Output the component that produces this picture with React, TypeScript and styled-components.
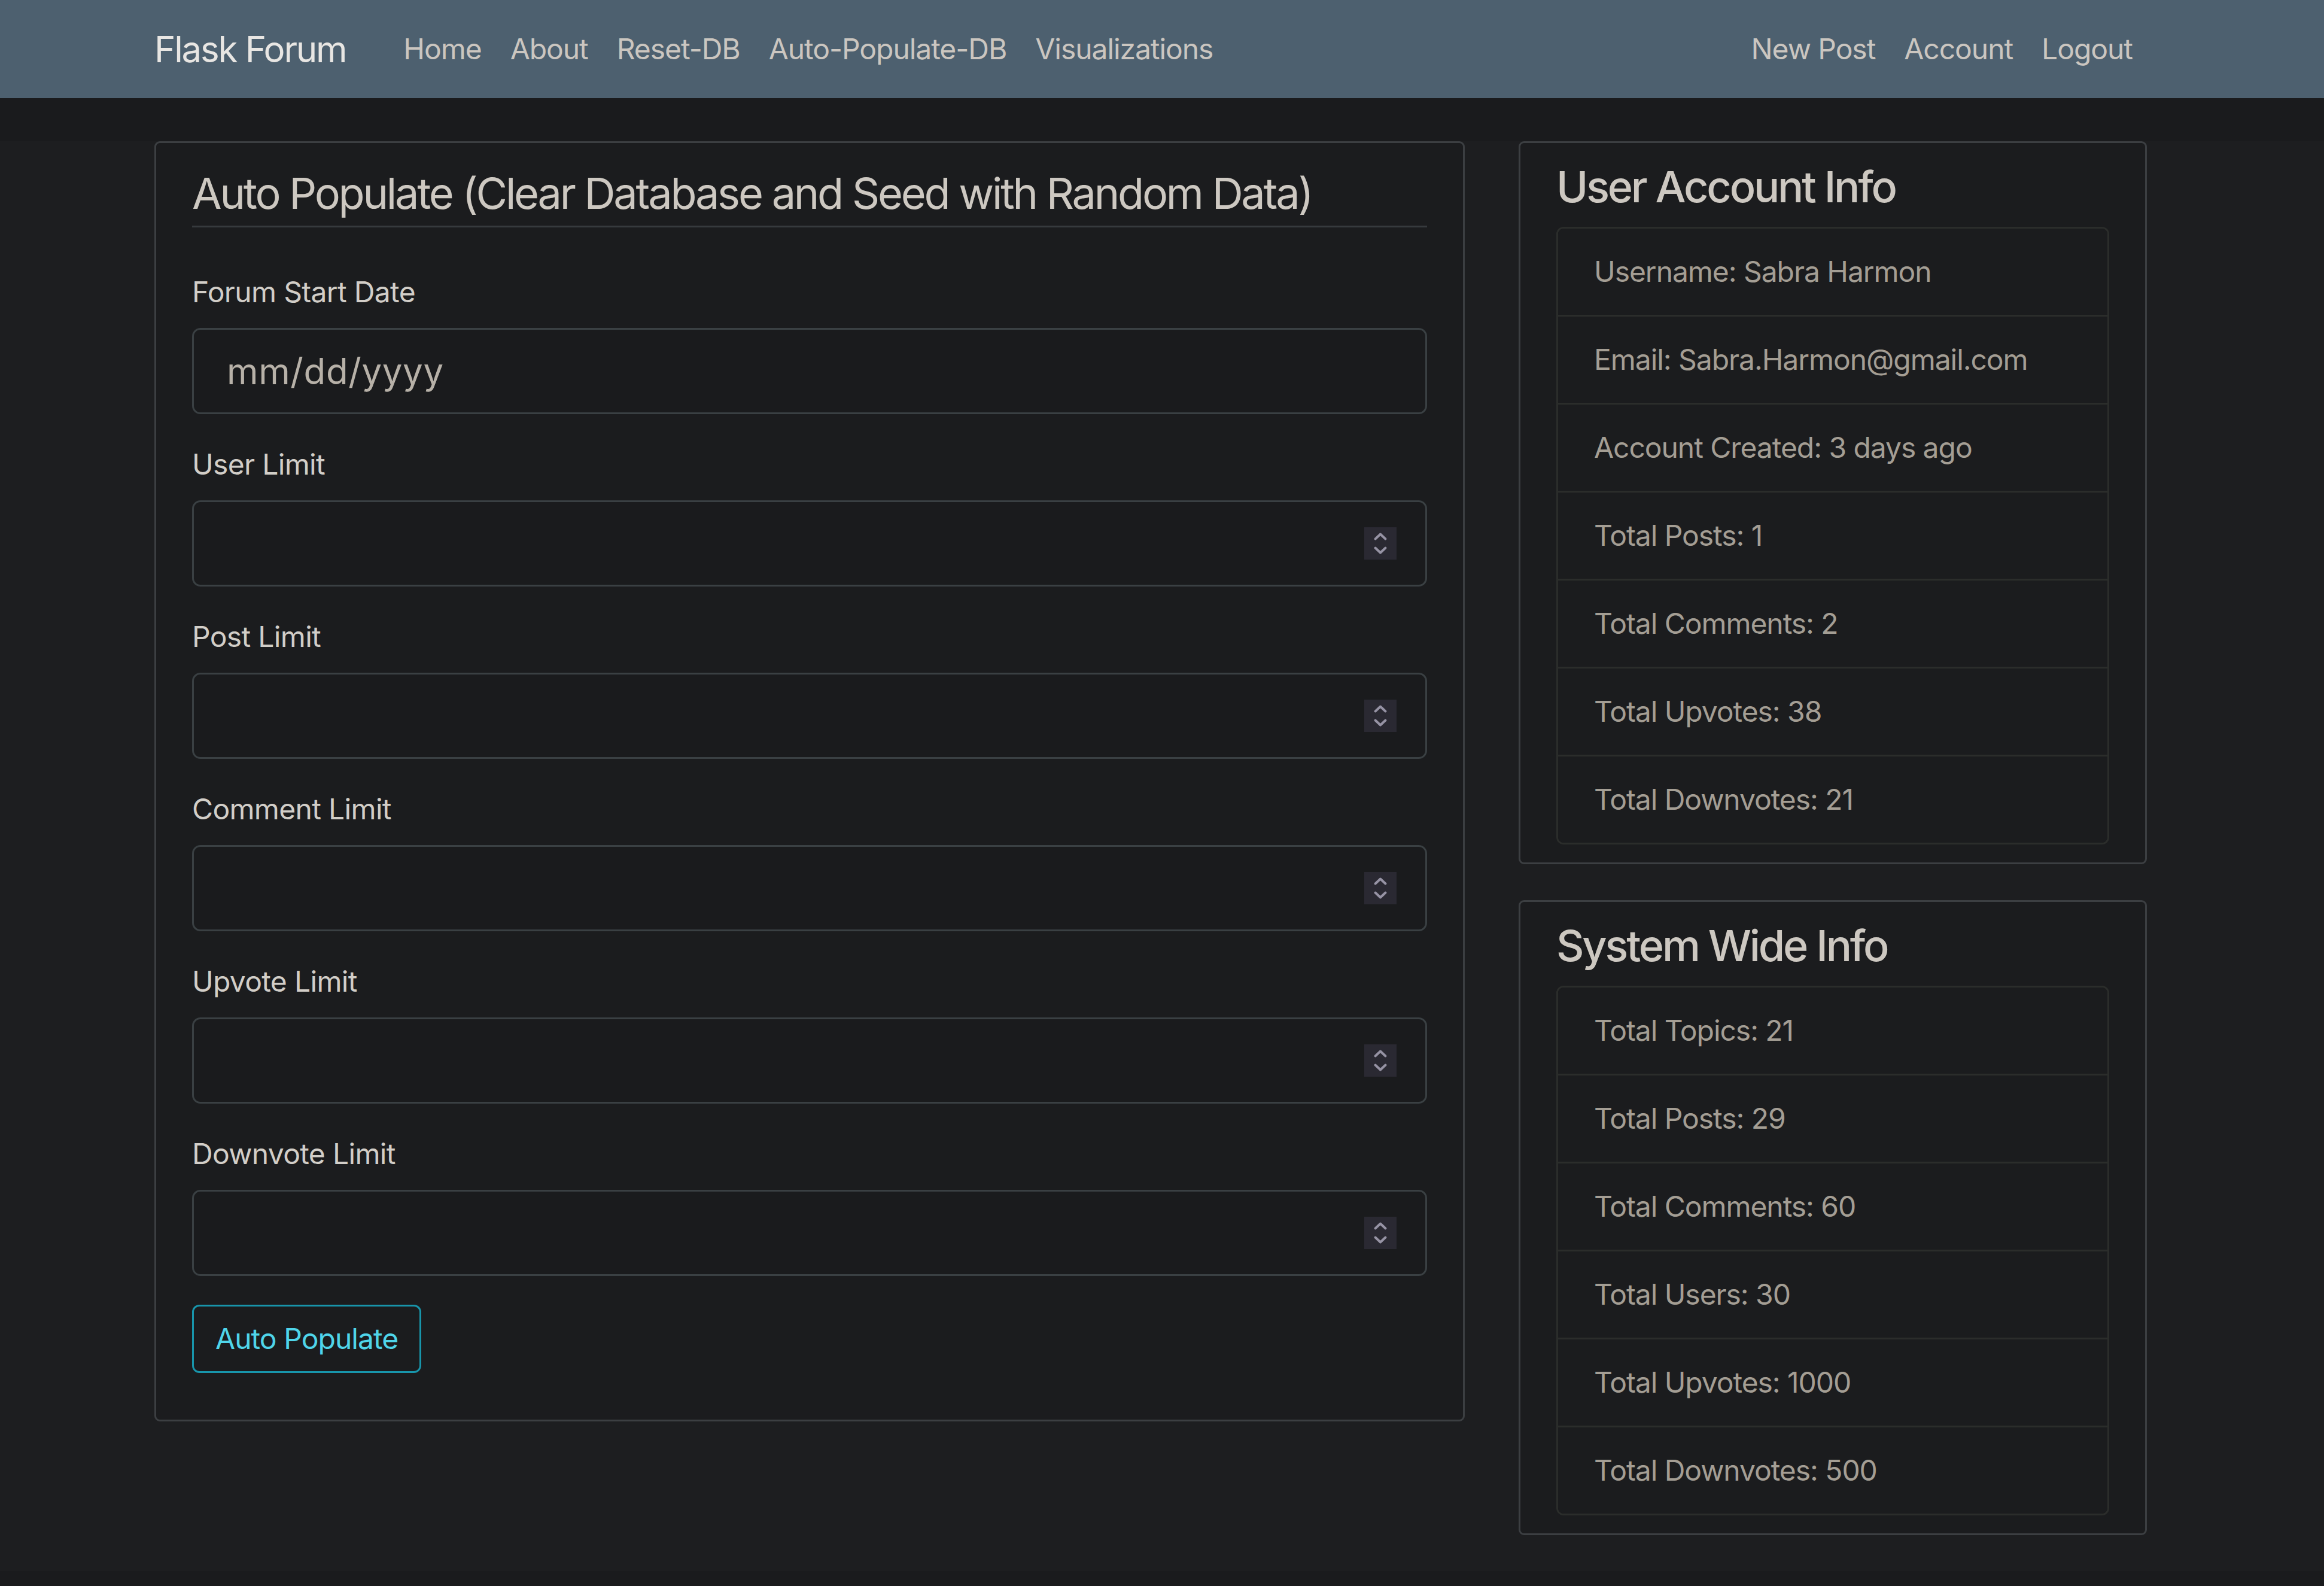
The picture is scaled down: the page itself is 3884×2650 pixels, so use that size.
import React from "react";
import styled, { createGlobalStyle } from "styled-components";

const GlobalStyle = createGlobalStyle`
  html {
    background: #1a1b1d;
  }
  body {
    margin: 0;
    background: #1a1b1d;
    font-family: "Inter", "Roboto", "Liberation Sans", sans-serif;
    color: #cdc8c2;
    -webkit-font-smoothing: antialiased;
  }
  * {
    box-sizing: border-box;
  }
`;

const Navbar = styled.nav`
  height: 164px;
  background: #4d606f;
  display: flex;
  align-items: center;
`;

const NavInner = styled.div`
  width: 3420px;
  margin-left: 213px;
  padding: 0 45px;
  display: flex;
  align-items: center;
`;

const Brand = styled.a`
  font-size: 60px;
  line-height: 90px;
  letter-spacing: -0.037em;
  color: #e8e6e3;
  margin-right: 72px;
  text-decoration: none;
`;

const NavGroup = styled.div<{ $end?: boolean }>`
  display: flex;
  align-items: center;
  margin-left: ${(p) => (p.$end ? "auto" : "0")};
`;

const NavLink = styled.a`
  font-size: 48px;
  line-height: 72px;
  letter-spacing: -0.022em;
  padding: 0 24px;
  color: #cbc6c0;
  text-decoration: none;
`;

const Main = styled.main`
  margin-top: 72px;
  background: #1d1e20;
`;

const Container = styled.div`
  width: 3420px;
  margin-left: 213px;
  padding: 0 45px;
  display: grid;
  grid-template-columns: 2190px 1050px;
  column-gap: 90px;
  align-items: start;
`;

const Column = styled.div`
  display: flex;
  flex-direction: column;
`;

const Section = styled.section`
  background: #1b1c1e;
  border: 3px solid #3c3f42;
  border-radius: 9px;
  padding: 30px 60px;
  margin-bottom: 60px;
`;

const Legend = styled.div`
  font-size: 72px;
  line-height: 108px;
  letter-spacing: -0.045em;
  color: #cdc8c1;
  border-bottom: 3px solid #363a3d;
  margin-bottom: 72px;
`;

const FormGroup = styled.div`
  margin-bottom: 48px;
`;

const Label = styled.label`
  display: block;
  font-size: 48px;
  line-height: 72px;
  letter-spacing: -0.014em;
  margin-bottom: 24px;
  color: #d2cec8;
`;

const InputBox = styled.div`
  height: 144px;
  border: 3px solid #3a4043;
  border-radius: 14px;
  background: #1a1b1d;
  padding: 0 48px;
  display: flex;
  align-items: center;
`;

const TextInput = styled.input<{ $inset?: boolean }>`
  flex: 1;
  min-width: 0;
  border: none;
  outline: none;
  background: transparent;
  padding: 0 0 0 ${(p) => (p.$inset ? "7px" : "0")};
  font-family: inherit;
  font-size: 60px;
  letter-spacing: 0.01em;
  color: #c8c3bc;
  &::placeholder {
    color: #b7b1a8;
    opacity: 1;
  }
  &::-webkit-outer-spin-button,
  &::-webkit-inner-spin-button {
    -webkit-appearance: none;
    margin: 0;
  }
`;

const Spinner = styled.div`
  width: 54px;
  height: 54px;
  background: #2a2932;
  display: flex;
  align-items: center;
  justify-content: center;
  flex-shrink: 0;
`;

const Button = styled.button`
  font-family: inherit;
  font-size: 48px;
  line-height: 72px;
  letter-spacing: -0.02em;
  padding: 18px 36px;
  border: 3px solid #1895ab;
  border-radius: 12px;
  background: transparent;
  color: #4fd5ea;
  cursor: pointer;
`;

const SideTitle = styled.h4`
  margin: 0 0 24px 0;
  font-size: 72px;
  line-height: 86px;
  font-weight: 500;
  letter-spacing: -0.044em;
  color: #cdc8c1;
`;

const List = styled.ul`
  list-style: none;
  margin: 0;
  padding: 0;
  border: 3px solid #2b2d2b;
  border-radius: 12px;
  overflow: hidden;
`;

const ListItem = styled.li`
  padding: 36px 60px;
  font-size: 48px;
  line-height: 72px;
  letter-spacing: -0.022em;
  color: #a49e94;
  background: #1b1c1e;
  border-bottom: 3px solid #2b2d2b;
  &:last-child {
    border-bottom: none;
  }
`;

const SpinIcon = () => (
  <svg width="54" height="54" viewBox="0 0 54 54">
    <path
      d="M18.5 19.5 L27 11.5 L35.5 19.5"
      fill="none"
      stroke="#9693a4"
      strokeWidth="4"
      strokeLinecap="round"
      strokeLinejoin="round"
    />
    <path
      d="M18.5 34.5 L27 42.5 L35.5 34.5"
      fill="none"
      stroke="#9693a4"
      strokeWidth="4"
      strokeLinecap="round"
      strokeLinejoin="round"
    />
  </svg>
);

const numberFields = [
  "User Limit",
  "Post Limit",
  "Comment Limit",
  "Upvote Limit",
  "Downvote Limit",
];

const userInfo = [
  "Username: Sabra Harmon",
  "Email: Sabra.Harmon@gmail.com",
  "Account Created: 3 days ago",
  "Total Posts: 1",
  "Total Comments: 2",
  "Total Upvotes: 38",
  "Total Downvotes: 21",
];

const systemInfo = [
  "Total Topics: 21",
  "Total Posts: 29",
  "Total Comments: 60",
  "Total Users: 30",
  "Total Upvotes: 1000",
  "Total Downvotes: 500",
];

export default function App() {
  return (
    <>
      <GlobalStyle />
      <Navbar>
        <NavInner>
          <Brand href="#">Flask Forum</Brand>
          <NavGroup>
            <NavLink href="#">Home</NavLink>
            <NavLink href="#">About</NavLink>
            <NavLink href="#">Reset-DB</NavLink>
            <NavLink href="#">Auto-Populate-DB</NavLink>
            <NavLink href="#">Visualizations</NavLink>
          </NavGroup>
          <NavGroup $end>
            <NavLink href="#">New Post</NavLink>
            <NavLink href="#">Account</NavLink>
            <NavLink href="#">Logout</NavLink>
          </NavGroup>
        </NavInner>
      </Navbar>
      <Main>
        <Container>
          <Column>
            <Section>
              <Legend>Auto Populate (Clear Database and Seed with Random Data)</Legend>
              <FormGroup>
                <Label>Forum Start Date</Label>
                <InputBox>
                  <TextInput type="text" placeholder="mm/dd/yyyy" $inset />
                </InputBox>
              </FormGroup>
              {numberFields.map((f) => (
                <FormGroup key={f}>
                  <Label>{f}</Label>
                  <InputBox>
                    <TextInput type="number" />
                    <Spinner>
                      <SpinIcon />
                    </Spinner>
                  </InputBox>
                </FormGroup>
              ))}
              <FormGroup>
                <Button type="button">Auto Populate</Button>
              </FormGroup>
            </Section>
          </Column>
          <Column>
            <Section>
              <SideTitle>User Account Info</SideTitle>
              <List>
                {userInfo.map((t) => (
                  <ListItem key={t}>{t}</ListItem>
                ))}
              </List>
            </Section>
            <Section>
              <SideTitle>System Wide Info</SideTitle>
              <List>
                {systemInfo.map((t) => (
                  <ListItem key={t}>{t}</ListItem>
                ))}
              </List>
            </Section>
          </Column>
        </Container>
      </Main>
    </>
  );
}
